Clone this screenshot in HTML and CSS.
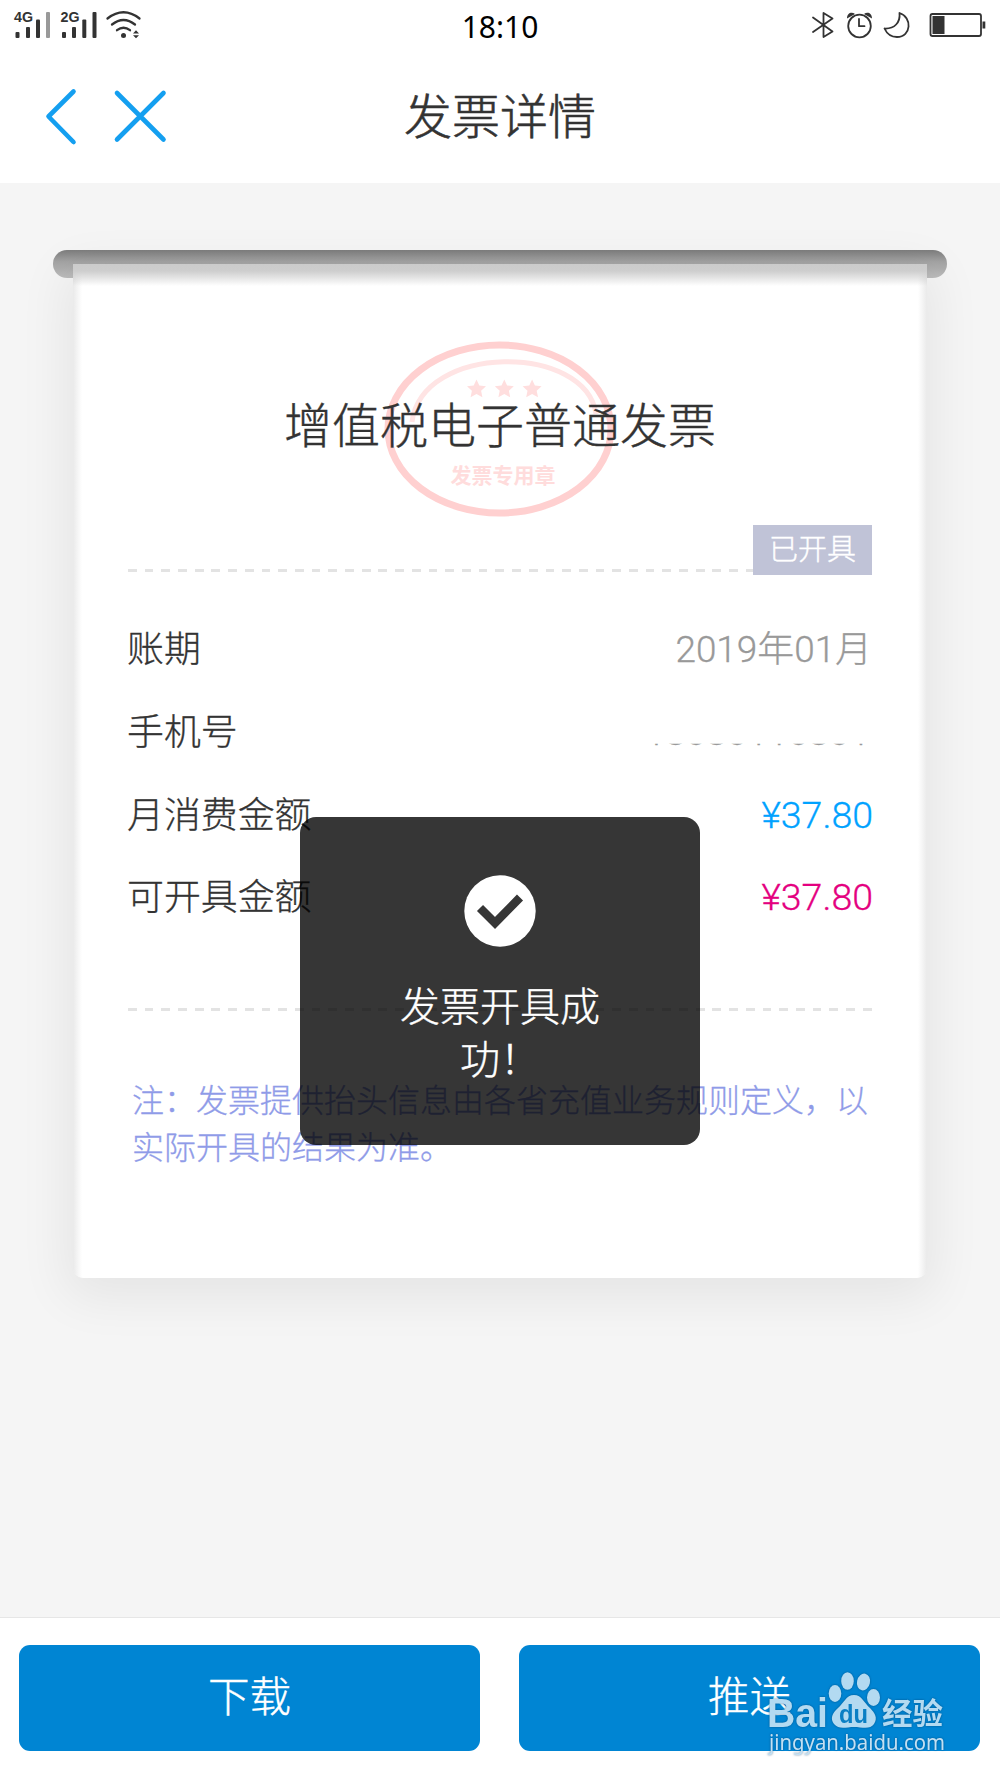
FILE: index.html
```html
<!DOCTYPE html>
<html lang="zh-CN">
<head>
<meta charset="utf-8">
<title>发票详情</title>
<link rel="stylesheet" href="styles.css">
</head>
<body>
<div class="screen">
  <div class="status">
    <svg class="status-left" viewBox="0 0 150 52" width="150" height="52">
      <g class="net"><text x="14" y="22" textLength="19" lengthAdjust="spacingAndGlyphs">4G</text><text x="60.500" y="22" textLength="19" lengthAdjust="spacingAndGlyphs">2G</text></g>
      <g class="bars">
        <rect x="15.500" y="32" width="4" height="6" rx="1"/><rect x="26" y="27" width="4" height="11" rx="1"/><rect x="36" y="19.500" width="4" height="18.500" rx="1"/><rect class="dim" x="46" y="12" width="4" height="26" rx="1"/>
        <rect x="62" y="32" width="4" height="6" rx="1"/><rect x="72" y="27" width="4" height="11" rx="1"/><rect x="82.300" y="19.500" width="4" height="18.500" rx="1"/><rect x="92.500" y="12" width="4" height="26" rx="1"/>
        <circle cx="123.500" cy="35.600" r="2.500"/>
        <path d="M133 33.500l3-3.200 3 3.200zM133 35.200l3 3 3-3z"/>
      </g>
      <path class="wifi" d="M107.500 18.500q16-12.500 32 0M112 24.500q11.500-9 23 0M117 30.200q6.500-5 13 0"/>
    </svg>
    <span class="clock">18:10</span>
    <svg class="status-right" viewBox="0 0 190 52" width="190" height="52">
      <g class="line">
        <path d="M3 17.500L22.500 31.500L13.500 37V13L22.500 18.500L3 32"/>
        <circle cx="49.500" cy="26" r="11.300"/><path d="M49 19v7.200h5.500"/>
        <path d="M89.500 13c13 4 12 24-2.500 24-6 0-10-3-12.500-8.500 10 .5 16-6 15-15.500z"/>
        <rect x="120.500" y="14" width="50.500" height="22" rx="2"/>
      </g>
      <g class="solid"><path d="M37 18.500c0-6 5-7 8-4.500zM62 18.500c0-6-5-7-8-4.500z"/><rect x="122.500" y="16" width="12" height="18"/><rect x="172.500" y="21.500" width="2.800" height="7"/></g>
    </svg>
  </div>
  <header class="nav">
    <svg class="nav-icons" viewBox="0 0 180 131" width="180" height="131">
      <path d="M73.500 39.500L48.500 64.500L73.500 90M117 41L163.500 87.500M163.500 41L117 87.500"/>
    </svg>
    <h1>发票详情</h1>
  </header>
  <main class="content">
    <div class="slot"></div>
    <section class="paper">
      <svg class="seal" viewBox="0 0 240 180" width="240" height="180">
        <ellipse class="ring" cx="119.500" cy="89" rx="111.500" ry="84"/>
        <path class="arc" d="M32 82C42 3 206 3 216 74"/>
        <g class="stars">
          <path id="star" d="M96.500 39.500l2.800 6 6.700.8-4.900 4.500 1.300 6.500-5.900-3.200-5.900 3.200 1.300-6.500-4.900-4.500 6.700-.8z"/>
          <use href="#star" x="27.800"/><use href="#star" x="55.600"/>
        </g>
        <text x="123" y="142.500">发票专用章</text>
      </svg>
      <h2>增值税电子普通发票</h2>
      <div class="state"><i class="dash"></i><span class="badge">已开具</span></div>
      <dl class="rows">
        <div><dt>账期</dt><dd>2019年01月</dd></div>
        <div><dt>手机号</dt><dd class="masked">18080110801</dd></div>
        <div><dt>月消费金额</dt><dd class="blue">¥37.80</dd></div>
        <div><dt>可开具金额</dt><dd class="pink">¥37.80</dd></div>
      </dl>
      <div class="dash full"></div>
      <p class="note">注：发票提供抬头信息由各省充值业务规则定义，以实际开具的结果为准。</p>
    </section>
  </main>
  <footer class="actions">
    <button>下载</button>
    <button>推送</button>
  </footer>
  <div class="toast">
    <svg viewBox="0 0 72 72" width="72" height="72"><circle cx="36" cy="36" r="35.700"/><path d="M16 33L31 48L56 22.500"/></svg>
    <p>发票开具成功！</p>
  </div>
  <svg class="watermark" viewBox="0 0 190 90" width="190" height="90">
    <g class="mark">
      <text class="latin" x="2" y="57" textLength="61" lengthAdjust="spacingAndGlyphs">Bai</text>
      <ellipse cx="70" cy="23.500" rx="6.300" ry="8.500"/><ellipse cx="82.500" cy="11" rx="6.300" ry="8.800"/><ellipse cx="98.500" cy="12" rx="6.500" ry="8.500" transform="rotate(12 98.500 12)"/><ellipse cx="108.500" cy="27.500" rx="6.500" ry="8.500"/>
      <path d="M89 25c-8 0-10 8-16 13-6 5-8 11-4 16 5 6 12 3 20 3s16 3 20-3c4-6 1-11-4-16-6-5-8-13-16-13z"/>
      <text class="du" x="74" y="52.500" textLength="29" lengthAdjust="spacingAndGlyphs">du</text>
      <text class="cn" x="117" y="54" textLength="61" lengthAdjust="spacingAndGlyphs">经验</text>
      <text class="url" x="4" y="80" textLength="176" lengthAdjust="spacingAndGlyphs">jingyan.baidu.com</text>
    </g>
  </svg>
</div>
</body>
</html>
```

FILE: styles.css
```css
* { box-sizing: border-box; margin: 0; padding: 0; }
body {
  font-family: "Noto Sans CJK SC", sans-serif;
  font-weight: 300;
  color: #333;
}
.screen {
  position: relative;
  display: flex;
  flex-direction: column;
  width: 1000px;
  height: 1778px;
  background: #f5f5f5;
  overflow: hidden;
}
.status {
  display: grid;
  grid-template-columns: 1fr auto 1fr;
  align-items: center;
  height: 52px;
  background: #fff;
}
.status-right { justify-self: end; }
.net { font: 700 14.500px "Liberation Sans", sans-serif; fill: #333; }
.bars, .solid { fill: #333; }
.bars .dim { fill: #999; }
.wifi, .line { fill: none; stroke: #333; stroke-width: 2.300; stroke-linecap: round; }
.line { stroke-width: 1.800; stroke-linejoin: round; }
.clock { padding-top: 2px; font: 400 30px/50px "Noto Sans", sans-serif; color: #000; }
.nav {
  display: grid;
  grid-template-columns: 1fr auto 1fr;
  height: 131px;
  background: #fff;
}
.nav-icons path { fill: none; stroke: #149ff0; stroke-width: 4.600; stroke-linecap: round; stroke-linejoin: round; }
.nav h1 { font-size: 48px; font-weight: 300; line-height: 122px; -webkit-text-stroke: .6px; }
.content { flex: 1; padding-top: 67px; }
.slot {
  height: 28px;
  margin: 0 53px;
  border-radius: 14px;
  background: linear-gradient(#7d7d7d, #a2a2a2 40%, #bdbdbd);
}
.paper {
  position: relative;
  height: 1014px;
  margin: -14px 73px 0;
  padding: 128px 55px 0;
  border-radius: 0 0 10px 10px;
  background:
    linear-gradient(#cbcbcb, #cecece 7px, rgba(255,255,255,0) 22px),
    linear-gradient(90deg, #eaeaea, #fff 9px, #fff calc(100% - 9px), #eaeaea);
  box-shadow: 0 12px 50px 8px rgba(0,0,0,.068);
}
.seal { position: absolute; left: 307px; top: 76px; }
.ring { fill: none; stroke: #ffd0d0; stroke-width: 7; }
.arc { fill: none; stroke: #ffe4e4; stroke-width: 5; }
.stars { fill: #ffdede; }
.seal text { font-size: 21px; font-weight: 700; fill: #ffdcdc; text-anchor: middle; }
.paper h2 { position: relative; font-size: 48px; font-weight: 300; line-height: 60px; text-align: center; white-space: nowrap; -webkit-text-stroke: .4px; }
.state { display: flex; align-items: flex-end; height: 50px; margin-top: 73px; }
.dash { height: 3px; background: repeating-linear-gradient(90deg, #e3e3e3 0 8.700px, transparent 8.700px 16.700px); }
.state .dash { flex: 1; margin-bottom: 3px; }
.badge { width: 119px; height: 50px; background: #c0c3d7; color: #fff; font-size: 29px; line-height: 45px; text-align: center; -webkit-text-stroke: .4px; }
.rows {
  display: grid;
  grid-template-rows: 83.700px 83px 81.500px 81.900px;
  margin-top: 29.600px;
  font-size: 36.900px;
  line-height: 82px;
  -webkit-text-stroke: .3px;
}
.rows div { display: flex; justify-content: space-between; align-items: baseline; }
.rows dt { margin-left: -1px; }
.rows dd { color: #999; font-family: Roboto, "Noto Sans CJK SC", sans-serif; }
.rows .blue, .rows .pink { margin-right: -1px; font-size: 37.500px; }
.rows .blue { color: #00a2ff; }
.rows .pink { color: #e4007f; }
.rows .masked { margin-right: 2px; clip-path: inset(51.500px 0 0 0); }
.full { margin-top: 73.300px; }
.note { margin: 64px 0 0 4px; width: 740px; font-size: 32px; line-height: 47.500px; color: #8f9be8; -webkit-text-stroke: .3px; }
.actions {
  display: flex;
  gap: 39px;
  height: 161px;
  padding: 26.500px 20px 27.500px 19px;
  border-top: 1px solid #e6e6e6;
  background: #fff;
}
.actions button {
  flex: 1;
  height: 106px;
  padding-bottom: 7px;
  border: 0;
  border-radius: 11px;
  background: #0085d3;
  color: #fff;
  font: 300 41.500px/98px "Noto Sans CJK SC", sans-serif;
  -webkit-text-stroke: .4px;
}
.toast {
  position: absolute;
  left: 300px;
  top: 817px;
  display: flex;
  flex-direction: column;
  align-items: center;
  width: 400px;
  height: 327.500px;
  padding-top: 58px;
  border-radius: 16px;
  background: rgba(0,0,0,.79);
  color: #fff;
}
.toast circle { fill: #fff; }
.toast path { fill: none; stroke: #363636; stroke-width: 8.500; }
.toast p { width: 200px; margin-top: 31px; font-size: 40px; line-height: 53px; text-align: center; line-break: anywhere; -webkit-text-stroke: .4px; }
.watermark { position: absolute; left: 765px; top: 1670px; overflow: visible; }
.mark { fill: #b3daf1; filter: drop-shadow(0 0 1px rgba(0,50,90,.55)); }
.latin { font: 700 41px "Liberation Sans", sans-serif; }
.du { font: 700 26px "Liberation Sans", sans-serif; fill: #0a7fc4; }
.cn { font-size: 30px; font-weight: 700; }
.url { font: 400 22px "Noto Sans", sans-serif; fill: #c3e0f3; }
```
